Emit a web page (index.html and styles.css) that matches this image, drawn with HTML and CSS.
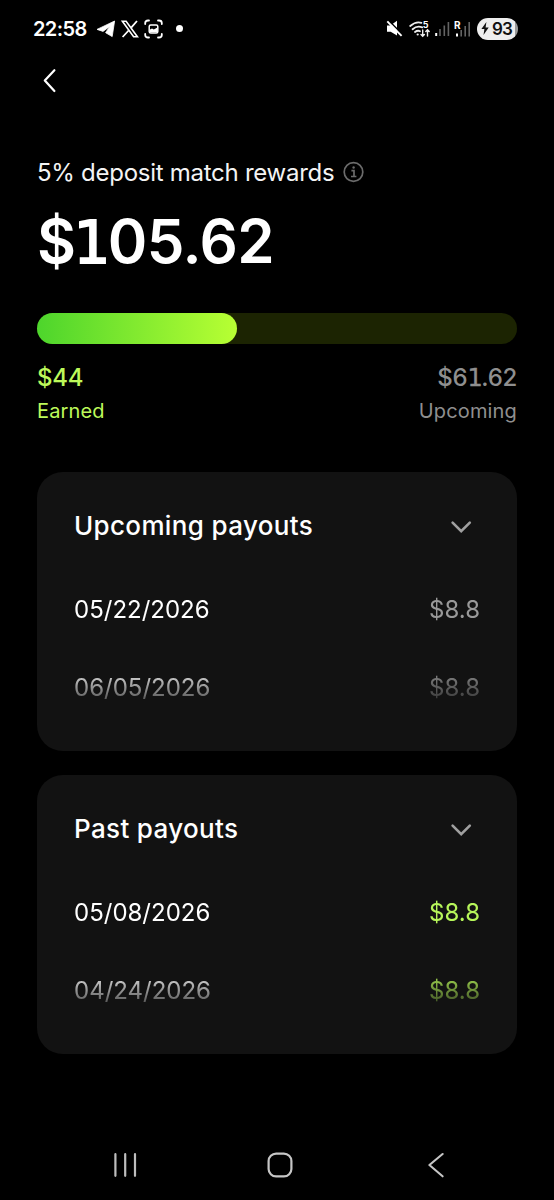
FILE: index.html
```html
<!DOCTYPE html>
<html lang="en">
<head>
<meta charset="utf-8">
<title>Deposit match rewards</title>
<link rel="stylesheet" href="styles.css">
</head>
<body>
<div class="screen">
  <header class="status">
    <div class="status-left">
      <span class="clock">22:58</span>
      <svg class="ic-send" width="20" height="18" viewBox="0 0 20 18"><path d="M1 9.4 18.6 1 16.2 16.6 9.6 12.7 13.8 6.4 7 11.4Z" fill="#fff" stroke="#fff" stroke-width=".8" stroke-linejoin="round"/></svg>
      <svg class="ic-x" width="18" height="18" viewBox="0 0 18 18" fill="none" stroke="#fff"><path d="M1.4 1.2H5.1L16.4 16.7H12.6Z" stroke-width="1.6"/><path d="M16 1 10.2 7.6M7.6 10.5 1.6 17" stroke-width="1.8"/></svg>
      <svg class="ic-capture" width="19" height="20" viewBox="0 0 19 20" fill="none" stroke="#fff" stroke-width="1.8" stroke-linecap="round"><path d="M1.2 5V4Q1.2 1.5 4 1.5H5M14 1.5H15Q17.8 1.5 17.8 4V5M17.8 15V16Q17.8 18.5 15 18.5H14M5 18.5H4Q1.2 18.5 1.2 16V15"/><rect x="5.2" y="6" width="8.6" height="8" rx="1.5" stroke-width="1.5"/><path d="M6 12.5V10.5L8 9.6 9.8 10.4 13 8.8V13.3H6Z" fill="#fff" stroke="none"/></svg>
      <span class="dot"></span>
    </div>
    <div class="status-right">
      <svg width="17" height="17" viewBox="0 0 17 17"><path d="M1 5.6H4.4L11 .8V15.6L4.7 11.7H1Z" fill="#fff"/><path d="M2.6 .4 16.6 14.8" stroke="#000" stroke-width="1.6"/><path d="M1.3 1.3 15.6 15.9" stroke="#fff" stroke-width="1.9"/></svg>
      <svg class="ic-wifi" width="22" height="18" viewBox="0 0 22 18" fill="none" stroke="#eee" stroke-width="1.8" stroke-linecap="round"><path d="M1.2 6Q7 1 12.4 2.8M3.6 9.2Q8 5.4 13.2 7.4M6 12Q8.6 10 11 11.2"/><circle cx="8.7" cy="14.5" r="1.1" fill="#eee" stroke="none"/><path d="M13.7 10V16M12 14.4 13.7 16.2 15.4 14.4M18.5 16V10M16.8 11.6 18.5 9.8 20.2 11.6" stroke-width="1.4"/><text class="tiny-glyph" x="13.8" y="7.8">5</text></svg>
      <svg class="ic-sig" width="15" height="16" viewBox="0 0 15 16"><path d="M.2 12H2.2V15H.2Z" fill="#fff"/><path d="M5 8V15M9.3 4.5V15M13.4 1V15" stroke="#636363" stroke-width="1.6"/></svg>
      <svg class="ic-roam" width="18" height="18" viewBox="0 0 18 18"><text class="roam-glyph" x="0" y="8.5">R</text><path d="M2 13.5H4V16.5H2Z" fill="#fff"/><path d="M7.2 10V16.5M11.2 6V16.5M15.2 2V16.5" stroke="#636363" stroke-width="1.6"/></svg>
      <div class="battery"><svg width="8" height="13" viewBox="0 0 8 13"><path d="M5.4 0 .4 7H3.4L2.5 13 7.7 5.6H4.6Z" fill="#111"/></svg><span>93</span></div>
    </div>
  </header>

  <nav class="topbar">
    <svg width="14" height="26" viewBox="0 0 14 26" fill="none" stroke="#fff" stroke-width="2.2" stroke-linecap="round" stroke-linejoin="round"><path d="M11.4 2.2 1.8 12.5 11.4 23"/></svg>
  </nav>

  <main class="content">
    <section class="summary">
      <div class="label-row">
        <h2 class="label">5% deposit match rewards</h2>
        <svg width="22" height="22" viewBox="0 0 22 22" fill="none" stroke="#6b6b6b" stroke-width="1.7"><circle cx="10.5" cy="11" r="9.3"/><path d="M8.4 9.7H11V15.5M8 15.5H13.4"/><circle cx="10.6" cy="6.5" r="1.2" fill="#6b6b6b" stroke="none"/></svg>
      </div>
      <div class="total">$<span class="one">1</span>05.62</div>
      <div class="track"><div class="fill"></div></div>
      <div class="legend">
        <div class="earned"><div class="value">$44</div><div class="caption">Earned</div></div>
        <div class="upcoming"><div class="value">$6<span class="one">1</span>.62</div><div class="caption">Upcoming</div></div>
      </div>
    </section>

    <section class="card">
      <div class="card-head">
        <h3 class="card-title">Upcoming payouts</h3>
        <svg class="chevron" width="22" height="14" viewBox="0 0 22 14"><path d="M2.6 2.6 11.2 11.2 19.8 2.6"/></svg>
      </div>
      <div class="rows">
        <div class="row"><span class="date">05/22/2026</span><span class="amount">$8.8</span></div>
        <div class="row"><span class="date">06/05/2026</span><span class="amount">$8.8</span></div>
      </div>
    </section>

    <section class="card past">
      <div class="card-head">
        <h3 class="card-title">Past payouts</h3>
        <svg class="chevron" width="22" height="14" viewBox="0 0 22 14"><path d="M2.6 2.6 11.2 11.2 19.8 2.6"/></svg>
      </div>
      <div class="rows">
        <div class="row"><span class="date">05/08/2026</span><span class="amount">$8.8</span></div>
        <div class="row"><span class="date">04/24/2026</span><span class="amount">$8.8</span></div>
      </div>
    </section>
  </main>

  <footer class="sysnav">
    <svg width="24" height="26" viewBox="0 0 24 26" stroke="#bdbdbd" stroke-width="2.2" stroke-linecap="round"><path d="M2.4 2.2V23.8M12.2 2.2V23.8M22 2.2V23.8"/></svg>
    <svg width="26" height="26" viewBox="0 0 26 26" fill="none" stroke="#c6c6c6" stroke-width="2.2"><rect x="1.6" y="1.6" width="22.8" height="22.8" rx="7.5"/></svg>
    <svg width="17" height="26" viewBox="0 0 17 26" fill="none" stroke="#c6c6c6" stroke-width="2.1" stroke-linecap="round" stroke-linejoin="round"><path d="M15.6 2 2.4 13 15.6 24.3"/></svg>
  </footer>
</div>
</body>
</html>
```
FILE: styles.css
```css
* { box-sizing: border-box; }
body { margin: 0; background: #000; color: #fff; font-family: Inter, "Liberation Sans", sans-serif; }
h2, h3 { margin: 0; font-weight: 400; }
svg { display: block; flex: none; }
.screen { width: 554px; height: 1200px; display: flex; flex-direction: column; background: #000; overflow: hidden; }

.status { height: 57px; padding: 0 36px 0 33px; display: flex; justify-content: space-between; align-items: center; }
.status-left, .status-right { display: flex; align-items: center; }
.clock { font-size: 20px; font-weight: 600; letter-spacing: -.6px; width: 63px; white-space: nowrap; }
.ic-x { margin-left: 5px; }
.ic-capture { margin-left: 5px; }
.dot { width: 7px; height: 7px; border-radius: 50%; background: #fff; margin-left: 13px; }
.ic-wifi { margin-left: 6px; }
.ic-sig { margin-left: 4px; }
.ic-roam { margin-left: 4px; }
.tiny-glyph { font-size: 9px; font-weight: 700; fill: #fff; stroke: none; }
.roam-glyph { font-size: 10px; font-weight: 700; fill: #fff; }
.battery { width: 41px; height: 22px; margin-left: 5px; border-radius: 11px; background: linear-gradient(90deg, #eee 93%, #999 93%); color: #111; display: flex; align-items: center; padding-left: 4px; gap: 3px; font-size: 17px; letter-spacing: -.8px; font-weight: 600; }

.topbar { height: 48px; padding: 11px 0 0 43px; }

.content { padding: 52px 37px 0; flex: 1; }
.label-row { display: flex; align-items: center; gap: 8px; height: 30px; }
.label { width: 298px; white-space: nowrap; font-size: 24px; line-height: 30px; letter-spacing: -.27px; padding-top: 1px; color: #f4f4f4; }
.total { margin-top: 18px; height: 72px; line-height: 72px; font-size: 60px; font-weight: 570; letter-spacing: -.55px; white-space: nowrap; }
.one { font-family: "DejaVu Sans", sans-serif; font-weight: 400; line-height: 1; }
.total .one { margin: 0 -2px; font-size: 58px; -webkit-text-stroke: 1.8px currentColor; }
.track { margin-top: 36px; height: 31px; border-radius: 16px; background: #1c2402; }
.fill { width: 200px; height: 31px; border-radius: 16px; background: linear-gradient(90deg, #4dd52c, #b8ff33); }
.legend { display: flex; justify-content: space-between; padding-top: 18px; height: 128px; }
.value { font-size: 24px; line-height: 32px; font-weight: 500; letter-spacing: -.3px; }
.value .one { margin-right: -1px; -webkit-text-stroke: .4px currentColor; }
.caption { font-size: 20px; line-height: 34px; letter-spacing: .15px; }
.earned { color: #bdf95a; }
.upcoming { color: #8f8f8f; text-align: right; }

.card { height: 279px; margin-bottom: 24px; padding: 32px 37px 0; border-radius: 26px; background: #121212; }
.card-head { display: flex; justify-content: space-between; align-items: center; height: 42px; padding-right: 8px; }
.card-title { font-size: 26px; font-weight: 500; letter-spacing: .35px; }
.chevron { margin-top: 4px; fill: none; stroke: #a0a0a0; stroke-width: 2.6; stroke-linecap: round; }
.rows { padding-top: 24px; mask-image: linear-gradient(180deg, #000 120px, transparent 168px); }
.row { height: 78px; display: flex; justify-content: space-between; align-items: center; font-size: 24px; }
.amount { color: #999; }
.past .amount { color: #b7f65a; }

.sysnav { height: 72px; padding: 2px 110px 0 113px; display: flex; justify-content: space-between; align-items: center; }
.sysnav svg:nth-child(2) { margin-right: 5px; }
```
